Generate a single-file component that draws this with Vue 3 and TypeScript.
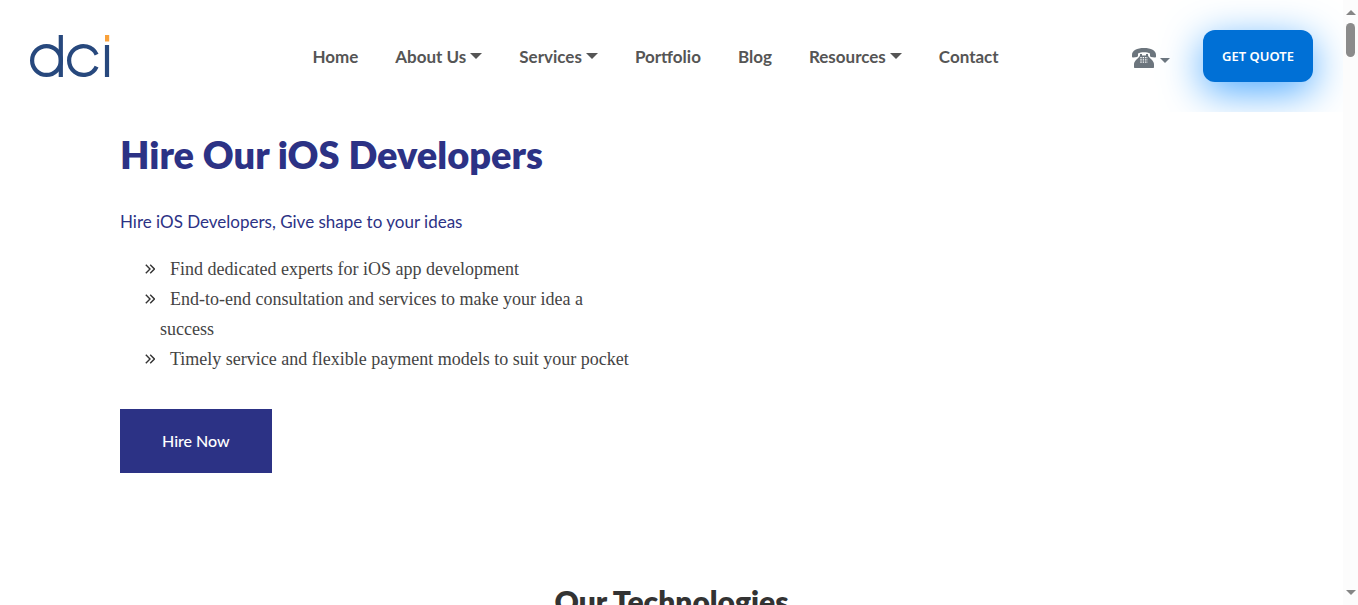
<script setup lang="ts">
interface NavItem {
  label: string
  menu: boolean
}

const navItems: NavItem[] = [
  { label: 'Home', menu: false },
  { label: 'About Us', menu: true },
  { label: 'Services', menu: true },
  { label: 'Portfolio', menu: false },
  { label: 'Blog', menu: false },
  { label: 'Resources', menu: true },
  { label: 'Contact', menu: false },
]

const benefits: string[] = [
  'Find dedicated experts for iOS app development',
  'End-to-end consultation and services to make your idea a success',
  'Timely service and flexible payment models to suit your pocket',
]
</script>

<template>
  <div class="shell">
    <div class="page">
      <header class="site-header">
        <a class="logo" href="#" aria-label="dci">
          <svg width="80" height="43" viewBox="0 0 80 43" fill="none" aria-hidden="true">
            <g stroke="#27487d" stroke-width="4.200">
              <circle cx="16.500" cy="25.500" r="14.400" />
              <path d="M30.800 0V42" />
              <path d="M66.600 31.500A14.400 14.400 0 1 1 66.600 19.500" />
              <path d="M77 10V42" />
            </g>
            <path d="M75 0h4.200v6.500H75z" fill="#f9a13a" />
          </svg>
        </a>
        <nav class="nav" aria-label="Main">
          <a v-for="item in navItems" :key="item.label" class="nav-link" href="#">
            {{ item.label }}<span v-if="item.menu" class="caret"></span>
          </a>
        </nav>
        <div class="actions">
          <button class="phone" type="button" aria-label="Phone numbers">
            <svg width="24" height="20" viewBox="0 0 24 20" aria-hidden="true">
              <path
                fill="#6c757d"
                d="M12 0C5 0 0 2.200 0 7v1.500c0 .8.500 1 1.200 1L5 8.900c.7-.1 1-.5 1-1.200V5.600C7.500 4.600 9.500 4.200 12 4.200s4.500.4 6 1.400v2.100c0 .7.300 1.100 1 1.200l3.800.6c.7 0 1.200-.2 1.200-1V7c0-4.800-5-7-12-7z"
              />
              <path
                fill="#6c757d"
                d="M8 6h2v1.500h4V6h2v1.500c.5 1.500 2 2.500 3.500 4 1.700 1.700 2.500 3 2.500 5V19c0 .7-.3 1-1 1H3c-.7 0-1-.3-1-1v-2.500c0-2 .8-3.300 2.500-5C6 10 7.500 9 8 7.500z"
              />
              <path
                stroke="#fff"
                stroke-width="1.200"
                stroke-dasharray="1.400 1"
                d="M8.300 9.600h7.500M8.300 11.900h7.500M8.300 14.200h7.500"
              />
            </svg>
            <span class="caret"></span>
          </button>
          <button class="quote" type="button">GET QUOTE</button>
        </div>
      </header>

      <main>
        <section class="hero">
          <h1>Hire Our iOS Developers</h1>
          <p class="tagline">Hire iOS Developers, Give shape to your ideas</p>
          <ul class="benefits">
            <li v-for="benefit in benefits" :key="benefit">
              <svg class="chevrons" width="10" height="11" viewBox="0 0 10 11" fill="none" aria-hidden="true">
                <path d="M.8.8 5 5 .8 9.200M5.200.8 9.400 5 5.200 9.200" stroke="#333" stroke-width="1.400" />
              </svg>{{ benefit }}
            </li>
          </ul>
          <a class="hire" href="#">Hire Now</a>
        </section>
        <section class="technologies">
          <h2>Our Technologies</h2>
        </section>
      </main>
    </div>

    <div class="scrollbar" aria-hidden="true">
      <span class="arrow up"></span>
      <span class="thumb"></span>
      <span class="arrow down"></span>
    </div>
  </div>
</template>

<style>
body {
  margin: 0;
  background: #fff;
}
</style>

<style scoped>
.shell {
  display: grid;
  grid-template-columns: minmax(0, 1fr) 15px;
  height: 100vh;
  overflow: hidden;
  font-family: Lato, sans-serif;
}

.page {
  overflow: hidden;
}

.site-header {
  display: grid;
  grid-template-columns: 1fr auto 1fr;
  align-items: center;
  box-sizing: border-box;
  height: 112px;
  padding: 0 30px;
  overflow: hidden;
}

.logo {
  display: flex;
  padding-top: 1px;
}

.nav {
  display: flex;
  gap: 37px;
  margin-right: 32px;
  padding-top: 2px;
}

.nav-link {
  display: flex;
  align-items: center;
  color: #555;
  font-size: 17px;
  font-weight: 700;
  line-height: 24px;
  text-decoration: none;
  white-space: nowrap;
}

.caret {
  flex: none;
  margin-left: 4px;
  border: 5px solid transparent;
  border-top-color: currentColor;
  border-bottom: 0;
}

.nav .caret {
  margin-bottom: 2px;
  border-width: 6px 6px 0;
}

.actions {
  display: flex;
  align-items: center;
  justify-content: flex-end;
  gap: 33px;
}

.phone {
  display: flex;
  align-items: center;
  padding: 4px 0 0;
  border: 0;
  background: none;
  color: #6c757d;
}

.phone .caret {
  margin-top: 4px;
}

.quote {
  min-width: 110px;
  height: 52px;
  padding: 0 16px;
  border: 0;
  border-radius: 12px;
  background: #0070d6;
  box-shadow: 0 10px 40px #4da9ff;
  color: #fff;
  font-family: "Noto Sans", sans-serif;
  font-size: 13px;
  font-weight: 600;
  white-space: nowrap;
}

.hero {
  max-width: 516px;
  margin-left: 120px;
}

h1 {
  margin: 18px 0 0;
  color: #2c3285;
  font-size: 38px;
  font-weight: 800;
  line-height: 48px;
  white-space: nowrap;
}

.tagline {
  margin: 32px 0 0;
  color: #2c3285;
  font-size: 17px;
  line-height: 24px;
}

.benefits {
  margin: 20px 0 0;
  padding: 0 0 0 40px;
  color: #444;
  font-family: "Liberation Serif", serif;
  font-size: 18px;
  line-height: 30px;
  list-style: none;
}

.chevrons {
  margin: 0 15px 0 -15px;
}

.hire {
  display: inline-block;
  margin-top: 35px;
  padding: 20px 42px;
  background: #2c3285;
  color: #fff;
  font-size: 16px;
  font-weight: 500;
  line-height: 24px;
  text-decoration: none;
}

.technologies {
  margin-top: 110px;
  text-align: center;
}

h2 {
  margin: 0;
  color: #333;
  font-size: 30px;
  font-weight: 800;
  line-height: 36px;
}

.scrollbar {
  display: flex;
  flex-direction: column;
  align-items: center;
  padding: 10px 0;
  background: #fcfcfc;
}

.arrow {
  border: 5px solid transparent;
}

.up {
  border-top: 0;
  border-bottom-color: #858585;
}

.down {
  margin-top: auto;
  border-top-color: #858585;
  border-bottom: 0;
}

.thumb {
  width: 9px;
  height: 34px;
  margin-top: 8px;
  border-radius: 5px;
  background: #8b8b8b;
}
</style>
